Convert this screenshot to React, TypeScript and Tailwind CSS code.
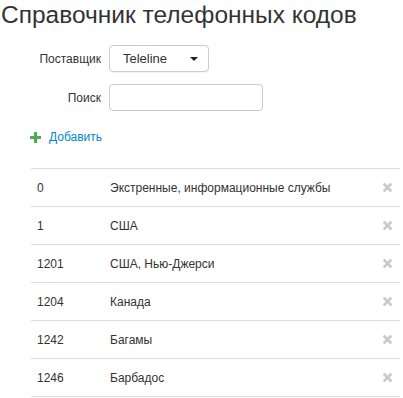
import React from "react";

const rows = [
  ["0", "Экстренные, информационные службы"],
  ["1", "США"],
  ["1201", "США, Нью-Джерси"],
  ["1204", "Канада"],
  ["1242", "Багамы"],
  ["1246", "Барбадос"],
];

function XIcon() {
  return (
    <svg width="9" height="9" viewBox="0 0 9 9">
      <path d="M1.5 1.5 L7.5 7.5 M7.5 1.5 L1.5 7.5" stroke="#c8c8c8" strokeWidth="2.6" strokeLinecap="square" />
    </svg>
  );
}

export default function App() {
  return (
    <div className="w-[403px] h-[398px] bg-white text-[#333] overflow-hidden" style={{ fontFamily: '"Liberation Sans", Arial, sans-serif' }}>
      <h3 className="text-[24.5px] leading-[28px] pt-[1px] pl-[1px] text-[#333]">Справочник телефонных кодов</h3>
      <div className="mt-[16px] flex items-center">
        <label className="w-[101px] text-right text-[12px]">Поставщик</label>
        <div className="ml-[8px] w-[100px] h-[27px] border border-[#ccc] rounded-[4px] flex items-center justify-between pl-[13px] pr-[10px] text-[13px] shadow-[0_1px_1px_rgba(0,0,0,0.05)]">
          <span>Teleline</span>
          <svg width="8" height="4" viewBox="0 0 8 4"><path d="M0 0 L8 0 L4 4 Z" fill="#222" /></svg>
        </div>
      </div>
      <div className="mt-[12px] flex items-center">
        <label className="w-[101px] text-right text-[12px]">Поиск</label>
        <div className="ml-[8px] w-[154px] h-[27px] border border-[#ccc] rounded-[4px]" />
      </div>
      <div className="mt-[17px] ml-[30px] flex items-center gap-[8px]">
        <svg width="11" height="11" viewBox="0 0 11 11"><path d="M4 0 H7 V4 H11 V7 H7 V11 H4 V7 H0 V4 H4 Z" fill="#4cae4c" /></svg>
        <span className="text-[12px] text-[#0088cc]">Добавить</span>
      </div>
      <div className="mt-[22px] ml-[31px] w-[369px] border-b border-[#ddd]">
        {rows.map(([code, name]) => (
          <div key={code} className="h-[38px] border-t border-[#ddd] flex items-center text-[12px]">
            <span className="w-[79px] pl-[6px]">{code}</span>
            <span className="flex-1">{name}</span>
            <span className="w-[17px] flex items-center"><XIcon /></span>
          </div>
        ))}
      </div>
    </div>
  );
}
